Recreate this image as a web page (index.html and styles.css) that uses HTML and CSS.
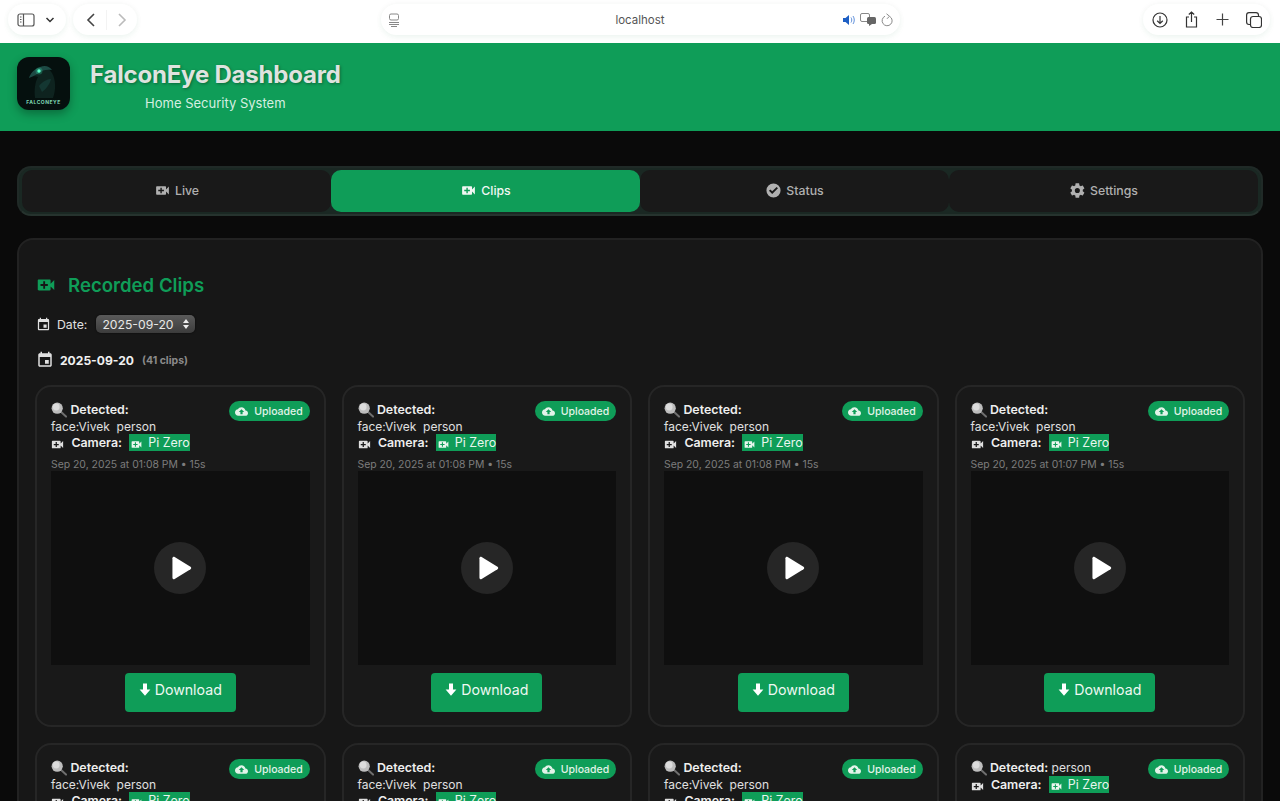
FILE: index.html
```html
<!DOCTYPE html>
<html lang="en">
<head>
    <meta charset="UTF-8">
    <meta name="viewport" content="width=device-width, initial-scale=1.0">
    <title>FalconEye Dashboard</title>
    <link rel="stylesheet" href="styles.css">
</head>
<body>
    <svg class="sprites" width="0" height="0">
        <symbol id="i-video" viewBox="0 0 24 24"><path d="M17 10.5V7c0-.55-.45-1-1-1H4c-.55 0-1 .45-1 1v10c0 .55.45 1 1 1h12c.55 0 1-.45 1-1v-3.5l4 4v-11l-4 4zM14 13h-3v3H9v-3H6v-2h3V8h2v3h3v2z"/></symbol>
        <symbol id="i-event" viewBox="0 0 24 24"><path d="M17 12h-5v5h5v-5zM16 1v2H8V1H6v2H5c-1.11 0-1.99.9-1.99 2L3 19c0 1.1.89 2 2 2h14c1.1 0 2-.9 2-2V5c0-1.1-.9-2-2-2h-1V1h-2zm3 18H5V8h14v11z"/></symbol>
        <symbol id="i-check" viewBox="0 0 24 24"><path d="M12 2a10 10 0 1 0 0 20 10 10 0 0 0 0-20zm-1.8 15-4.6-4.6 1.9-1.9 2.7 2.7 6.2-6.2 1.9 1.9-8.1 8.1z"/></symbol>
        <symbol id="i-gear" viewBox="0 0 24 24"><path d="M19.4 13c.04-.33.06-.66.06-1s-.02-.67-.07-1l2.16-1.68c.2-.15.25-.42.13-.64l-2.05-3.55c-.12-.22-.38-.3-.61-.22l-2.55 1.03c-.53-.4-1.1-.74-1.73-1l-.38-2.72A.5.5 0 0 0 13.86 1.8H9.76c-.25 0-.46.18-.5.42l-.38 2.72c-.63.26-1.2.6-1.73 1L4.6 4.9c-.23-.09-.49 0-.61.22L1.94 8.68c-.13.22-.07.49.12.64L4.22 11c-.05.33-.08.67-.08 1s.03.67.08 1l-2.16 1.68c-.2.15-.25.42-.12.64l2.05 3.55c.12.22.38.3.61.22l2.55-1.03c.53.4 1.1.74 1.73 1l.38 2.72c.04.24.25.42.5.42h4.1c.25 0 .46-.18.5-.42l.38-2.72c.63-.26 1.2-.6 1.73-1l2.55 1.03c.23.09.49 0 .61-.22l2.05-3.55c.12-.22.07-.49-.13-.64L19.4 13zM11.8 15.6a3.6 3.6 0 1 1 0-7.2 3.6 3.6 0 0 1 0 7.2z"/></symbol>
        <symbol id="i-cloud" viewBox="0 0 24 24"><path d="M19.35 10.04C18.67 6.59 15.64 4 12 4 9.11 4 6.6 5.64 5.35 8.04 2.34 8.36 0 10.91 0 14c0 3.31 2.69 6 6 6h13c2.76 0 5-2.24 5-5 0-2.64-2.05-4.78-4.65-4.96zM14 13v4h-4v-4H7l5-5 5 5h-3z"/></symbol>
        <symbol id="i-lens" viewBox="0 0 16 16">
            <path d="M9.6 9.6 15 14.6" stroke="#6f6f6f" stroke-width="2" stroke-linecap="round" fill="none"/>
            <circle cx="6.2" cy="6.2" r="5.6" fill="#bdbdbd"/>
            <circle cx="5.2" cy="5" r="3.4" fill="#dcdcdc"/>
        </symbol>
        <symbol id="i-play" viewBox="0 0 24 24"><path d="M5.5 3.6c0-1 1-1.6 1.900-1.100l13.600 8.400c.8.5.8 1.700 0 2.200L7.400 21.500c-.9.5-1.900-.1-1.900-1.100V3.600z"/></symbol>
        <symbol id="i-down" viewBox="0 0 12 14"><path d="M4 1h4v6h3.400L6 13.200.6 7H4z"/></symbol>
    </svg>

    <div class="page">
        <div class="toolbar">
            <div class="tool-group">
                <div class="pill pill-side">
                    <svg class="tool-icon" width="18" height="14" viewBox="0 0 18 14" fill="none" stroke="#555" stroke-width="1.2"><rect x="1" y="1" width="16" height="12" rx="2"/><path d="M6.5 1v12M3 4h1.5M3 6.5h1.5M3 9h1.5"/></svg>
                    <svg class="tool-icon" width="10" height="6" viewBox="0 0 10 6" fill="none" stroke="#333" stroke-width="1.5"><path d="M1.5 1 5 4.5 8.500 1"/></svg>
                </div>
                <div class="pill pill-nav">
                    <svg class="tool-icon" width="10" height="14" viewBox="0 0 10 14" fill="none" stroke="#444" stroke-width="1.6"><path d="M8 1 2 7l6 6"/></svg>
                    <span class="pill-sep"></span>
                    <svg class="tool-icon" width="10" height="14" viewBox="0 0 10 14" fill="none" stroke="#bbb" stroke-width="1.6"><path d="M2 1l6 6-6 6"/></svg>
                </div>
            </div>
            <div class="pill pill-url">
                <svg class="tool-icon" width="12" height="14" viewBox="0 0 12 14" fill="none" stroke="#888" stroke-width="1"><rect x="1.500" y="1" width="9" height="6" rx="1.500"/><path d="M1 9.500h10M1 11.500h10M3 13.500h6"/></svg>
                <span class="url-text">localhost</span>
                <div class="url-icons">
                    <svg class="tool-icon" width="13" height="12" viewBox="0 0 13 12"><path d="M0 4h2.500L6 1v10L2.500 8H0z" fill="#1d5fc4"/><path d="M8 3.500c1 1.400 1 3.600 0 5M10 2c1.700 2.200 1.700 5.800 0 8" fill="none" stroke="#4f83d6" stroke-width=".9"/></svg>
                    <svg class="tool-icon" width="17" height="13" viewBox="0 0 17 13"><rect x=".5" y=".5" width="9" height="8" rx="1.500" fill="#fff" stroke="#888"/><rect x="7" y="4" width="9" height="7" rx="1.500" fill="#666"/><path d="M9 11v2l3-2z" fill="#666"/></svg>
                    <svg class="tool-icon" width="12" height="14" viewBox="0 0 12 14" fill="none" stroke="#8a8a8a" stroke-width="1"><path d="M8.800 3.500A5 5 0 1 1 4 3.200"/><path d="M5.500 .8 8.500 3.200 6 5.800"/></svg>
                </div>
            </div>
            <div class="pill pill-right">
                <svg class="tool-icon" width="16" height="16" viewBox="0 0 16 16" fill="none" stroke="#333" stroke-width="1.200"><circle cx="8" cy="8" r="7"/><path d="M8 4v7.500M5.200 8.800 8 11.500l2.800-2.700"/></svg>
                <svg class="tool-icon" width="13" height="17" viewBox="0 0 13 17" fill="none" stroke="#333" stroke-width="1.200"><path d="M4 6H1.500v10h10V6H9M6.500 11V1M3.800 3.500 6.500 1l2.700 2.500"/></svg>
                <svg class="tool-icon" width="13" height="13" viewBox="0 0 13 13" fill="none" stroke="#444" stroke-width="1.200"><path d="M6.500 .5v12M.5 6.500h12"/></svg>
                <svg class="tool-icon" width="16" height="16" viewBox="0 0 16 16" fill="none" stroke="#333" stroke-width="1.200"><rect x="4.500" y="4.500" width="11" height="11" rx="2.500"/><path d="M4.500 12.500H3A2.500 2.500 0 0 1 .6 10V3A2.500 2.500 0 0 1 3 .6h7a2.500 2.500 0 0 1 2.500 2.400v1.500"/></svg>
            </div>
        </div>

        <header class="app-header">
            <div class="logo">
                <svg class="logo-bird" width="34" height="36" viewBox="0 0 34 36">
                    <path d="M26 36c3-8 3-18-1-25-3-5-9-7-14-5C7 8 5 11 3 15c3-1 6-1 8 0-3 5-4 13-3 21z" fill="#0e231f"/>
                    <path d="M2 16c1-4 5-9 11-11 5-2 9-1 12 3-5-1-10 0-13 3-3 2-6 3-10 5z" fill="#1d4a44"/>
                    <path d="M12 24c3-4 8-7 12-7-1 5-5 10-9 13z" fill="#143732"/>
                    <circle cx="12" cy="9" r="3.500" fill="#38e6b0" opacity=".25"/>
                    <circle cx="12" cy="9" r="1.700" fill="#5dffc8"/>
                </svg>
                <span class="logo-text">FALCONEYE</span>
            </div>
            <div class="brand">
                <h1>FalconEye Dashboard</h1>
                <p>Home Security System</p>
            </div>
        </header>

        <main class="content">
            <nav class="tabs">
                <a class="tab"><svg class="icon"><use href="#i-video"/></svg>Live</a>
                <a class="tab active"><svg class="icon"><use href="#i-video"/></svg>Clips</a>
                <a class="tab"><svg class="icon"><use href="#i-check"/></svg>Status</a>
                <a class="tab"><svg class="icon"><use href="#i-gear"/></svg>Settings</a>
            </nav>

            <section class="panel">
                <h2 class="panel-title"><svg class="icon"><use href="#i-video"/></svg>Recorded Clips</h2>
                <div class="date-filter">
                    <svg class="icon"><use href="#i-event"/></svg>
                    <label>Date:</label>
                    <div class="date-select">2025-09-20
                        <svg width="6" height="10" viewBox="0 0 6 10" fill="#eee"><path d="M3 0l3 4H0zM3 10 0 6h6z"/></svg>
                    </div>
                </div>
                <div class="date-heading">
                    <svg class="icon"><use href="#i-event"/></svg>
                    <strong>2025-09-20</strong>
                    <small>(41 clips)</small>
                </div>

                <div class="clip-grid">
                    <article class="clip">
                        <div class="clip-head">
                            <div class="clip-info">
                                <svg class="lens"><use href="#i-lens"/></svg> <b>Detected:</b> <span class="nowrap">face:Vivek&nbsp; person</span><br>
                                <svg class="icon"><use href="#i-video"/></svg> <b>Camera:</b> <span class="cam"><svg class="icon"><use href="#i-video"/></svg>Pi Zero</span>
                            </div>
                            <span class="badge"><svg class="icon"><use href="#i-cloud"/></svg>Uploaded</span>
                        </div>
                        <div class="clip-time">Sep 20, 2025 at 01:08 PM • 15s</div>
                        <div class="video"><span class="play"><svg><use href="#i-play"/></svg></span></div>
                        <a class="download"><svg><use href="#i-down"/></svg>Download</a>
                    </article>
                    <article class="clip">
                        <div class="clip-head">
                            <div class="clip-info">
                                <svg class="lens"><use href="#i-lens"/></svg> <b>Detected:</b> <span class="nowrap">face:Vivek&nbsp; person</span><br>
                                <svg class="icon"><use href="#i-video"/></svg> <b>Camera:</b> <span class="cam"><svg class="icon"><use href="#i-video"/></svg>Pi Zero</span>
                            </div>
                            <span class="badge"><svg class="icon"><use href="#i-cloud"/></svg>Uploaded</span>
                        </div>
                        <div class="clip-time">Sep 20, 2025 at 01:08 PM • 15s</div>
                        <div class="video"><span class="play"><svg><use href="#i-play"/></svg></span></div>
                        <a class="download"><svg><use href="#i-down"/></svg>Download</a>
                    </article>
                    <article class="clip">
                        <div class="clip-head">
                            <div class="clip-info">
                                <svg class="lens"><use href="#i-lens"/></svg> <b>Detected:</b> <span class="nowrap">face:Vivek&nbsp; person</span><br>
                                <svg class="icon"><use href="#i-video"/></svg> <b>Camera:</b> <span class="cam"><svg class="icon"><use href="#i-video"/></svg>Pi Zero</span>
                            </div>
                            <span class="badge"><svg class="icon"><use href="#i-cloud"/></svg>Uploaded</span>
                        </div>
                        <div class="clip-time">Sep 20, 2025 at 01:08 PM • 15s</div>
                        <div class="video"><span class="play"><svg><use href="#i-play"/></svg></span></div>
                        <a class="download"><svg><use href="#i-down"/></svg>Download</a>
                    </article>
                    <article class="clip">
                        <div class="clip-head">
                            <div class="clip-info">
                                <svg class="lens"><use href="#i-lens"/></svg> <b>Detected:</b> <span class="nowrap">face:Vivek&nbsp; person</span><br>
                                <svg class="icon"><use href="#i-video"/></svg> <b>Camera:</b> <span class="cam"><svg class="icon"><use href="#i-video"/></svg>Pi Zero</span>
                            </div>
                            <span class="badge"><svg class="icon"><use href="#i-cloud"/></svg>Uploaded</span>
                        </div>
                        <div class="clip-time">Sep 20, 2025 at 01:07 PM • 15s</div>
                        <div class="video"><span class="play"><svg><use href="#i-play"/></svg></span></div>
                        <a class="download"><svg><use href="#i-down"/></svg>Download</a>
                    </article>
                    <article class="clip">
                        <div class="clip-head">
                            <div class="clip-info">
                                <svg class="lens"><use href="#i-lens"/></svg> <b>Detected:</b> <span class="nowrap">face:Vivek&nbsp; person</span><br>
                                <svg class="icon"><use href="#i-video"/></svg> <b>Camera:</b> <span class="cam"><svg class="icon"><use href="#i-video"/></svg>Pi Zero</span>
                            </div>
                            <span class="badge"><svg class="icon"><use href="#i-cloud"/></svg>Uploaded</span>
                        </div>
                    </article>
                    <article class="clip">
                        <div class="clip-head">
                            <div class="clip-info">
                                <svg class="lens"><use href="#i-lens"/></svg> <b>Detected:</b> <span class="nowrap">face:Vivek&nbsp; person</span><br>
                                <svg class="icon"><use href="#i-video"/></svg> <b>Camera:</b> <span class="cam"><svg class="icon"><use href="#i-video"/></svg>Pi Zero</span>
                            </div>
                            <span class="badge"><svg class="icon"><use href="#i-cloud"/></svg>Uploaded</span>
                        </div>
                    </article>
                    <article class="clip">
                        <div class="clip-head">
                            <div class="clip-info">
                                <svg class="lens"><use href="#i-lens"/></svg> <b>Detected:</b> <span class="nowrap">face:Vivek&nbsp; person</span><br>
                                <svg class="icon"><use href="#i-video"/></svg> <b>Camera:</b> <span class="cam"><svg class="icon"><use href="#i-video"/></svg>Pi Zero</span>
                            </div>
                            <span class="badge"><svg class="icon"><use href="#i-cloud"/></svg>Uploaded</span>
                        </div>
                    </article>
                    <article class="clip">
                        <div class="clip-head">
                            <div class="clip-info">
                                <svg class="lens"><use href="#i-lens"/></svg> <b>Detected:</b> <span class="nowrap">person</span><br>
                                <svg class="icon"><use href="#i-video"/></svg> <b>Camera:</b> <span class="cam"><svg class="icon"><use href="#i-video"/></svg>Pi Zero</span>
                            </div>
                            <span class="badge"><svg class="icon"><use href="#i-cloud"/></svg>Uploaded</span>
                        </div>
                    </article>
                </div>
            </section>
        </main>
    </div>
</body>
</html>
```

FILE: styles.css
```css
* {
    box-sizing: border-box;
}
html, body {
    margin: 0;
    height: 100%;
    overflow: hidden;
}
body {
    font-family: 'Inter', 'Liberation Sans', sans-serif;
    background: #0a0a0a;
    color: #e0e0e0;
}
.sprites {
    position: absolute;
}
.page {
    height: 100vh;
    overflow: hidden;
}
.icon {
    width: 14px;
    height: 14px;
    fill: currentColor;
    flex: none;
}
.nowrap {
    white-space: nowrap;
}

/* browser bar */
.toolbar {
    height: 43px;
    background: #fff;
    display: flex;
    align-items: flex-start;
    padding: 4px 10px 0 8px;
}
.tool-group {
    display: flex;
    gap: 7px;
}
.pill {
    height: 31px;
    border-radius: 16px;
    background: #fff;
    box-shadow: 0 3px 6px rgba(15, 157, 88, 0.05), 0 0 6px rgba(0, 0, 0, 0.04);
    display: flex;
    align-items: center;
}
.tool-icon {
    flex: none;
}
.pill-side {
    width: 58px;
    padding: 0 11px 0 9px;
    justify-content: space-between;
}
.pill-nav {
    width: 64px;
    padding: 0 10px 0 13px;
    justify-content: space-between;
}
.pill-sep {
    width: 1px;
    height: 20px;
    background: #f3f3f3;
}
.pill-url {
    width: 519px;
    margin: 0 auto;
    padding: 0 7px;
    position: relative;
    justify-content: space-between;
}
.url-text {
    position: absolute;
    left: 0;
    right: 0;
    text-align: center;
    font-size: 11.5px;
    color: #555;
}
.url-icons {
    display: flex;
    align-items: center;
    gap: 4px;
}
.pill-right {
    width: 127px;
    padding: 0 8px 0 9px;
    justify-content: space-between;
}

/* green header */
.app-header {
    height: 88px;
    background: #0f9d58;
    display: flex;
    align-items: flex-start;
    gap: 20px;
    padding: 14px 17px 0;
}
.logo {
    width: 53px;
    height: 53px;
    border-radius: 12px;
    background: #05100e;
    box-shadow: 0 4px 10px rgba(0, 0, 0, 0.3);
    display: flex;
    flex-direction: column;
    align-items: center;
    justify-content: flex-end;
    padding-bottom: 4px;
    overflow: hidden;
}
.logo-bird {
    display: block;
    margin-bottom: 1px;
}
.logo-text {
    font-size: 5px;
    font-weight: 700;
    letter-spacing: 0.5px;
    color: #7fd8b4;
    line-height: 7px;
}
.brand {
    text-align: center;
    margin-top: 3px;
}
.brand h1 {
    margin: 0;
    font-size: 24px;
    font-weight: 700;
    letter-spacing: -0.2px;
    line-height: 30px;
    color: #dfe3df;
    text-shadow: 1px 1px 3px rgba(0, 0, 0, 0.35);
}
.brand p {
    margin: 5px 0 0;
    font-size: 13px;
    line-height: 16px;
    color: #d6efe1;
}

/* tabs */
.content {
    padding: 35px 17px 0;
}
.tabs {
    height: 50px;
    display: grid;
    grid-template-columns: repeat(4, 1fr);
    padding: 2px 3px 2px;
    border: 2px solid #202a27;
    border-bottom-color: #26332e;
    border-radius: 14px;
    background: #1a2823;
    margin-bottom: 22px;
}
.tab {
    display: flex;
    align-items: center;
    justify-content: center;
    gap: 4px;
    padding-bottom: 2px;
    font-size: 12.3px;
    font-weight: 500;
    color: #b0b0b0;
    background: #191919;
    border-radius: 10px;
}
.tab.active {
    background: #0f9d58;
    color: #f1f7f3;
}
.tab .icon {
    width: 17px;
    height: 17px;
}

/* clips panel */
.panel {
    background: #171717;
    border: 2px solid #222;
    border-radius: 16px;
    padding: 32px 16px 16px;
}
.panel-title {
    margin: 0 0 17px;
    display: flex;
    align-items: center;
    gap: 11px;
    font-size: 18.6px;
    line-height: 26px;
    font-weight: 600;
    color: #0f9d58;
}
.panel-title .icon {
    width: 22px;
    height: 22px;
}
.date-filter {
    display: flex;
    align-items: center;
    font-size: 12.3px;
    color: #e0e0e0;
    height: 18px;
    margin-bottom: 18px;
}
.date-filter .icon {
    width: 15px;
    height: 15px;
    margin: 0 6px 0 1px;
}
.date-filter label {
    margin-right: 9px;
}
.date-select {
    width: 99px;
    height: 18px;
    border-radius: 5px;
    background: linear-gradient(#5a5a5a, #3c3c3c);
    box-shadow: 0 0 2px rgba(0, 0, 0, 0.8);
    display: flex;
    align-items: center;
    justify-content: space-between;
    padding: 0 6px;
    font-size: 12.2px;
    color: #e8e8e8;
}
.date-heading {
    display: flex;
    align-items: center;
    height: 18px;
    margin-bottom: 16px;
}
.date-heading .icon {
    width: 18px;
    height: 18px;
    margin: 0 6px 0 1px;
}
.date-heading strong {
    font-size: 12.1px;
    font-weight: 700;
    color: #f0f0f0;
    margin-right: 8px;
}
.date-heading small {
    font-size: 10.5px;
    font-weight: 700;
    color: #8a8a8a;
}

/* clip cards */
.clip-grid {
    display: grid;
    grid-template-columns: repeat(4, 1fr);
    gap: 16px;
}
.clip {
    background: #191919;
    border: 2px solid #262626;
    border-radius: 16px;
    padding: 14px 14px 13px;
    display: flex;
    flex-direction: column;
}
.clip-head {
    display: flex;
    justify-content: space-between;
    align-items: flex-start;
}
.clip-info {
    font-size: 12px;
    line-height: 16.5px;
    color: #e0e0e0;
    width: 170px;
    padding-top: 1px;
}
.clip-info b {
    font-size: 12.4px;
    font-weight: 600;
    color: #eee;
}
.clip-info .icon {
    width: 15px;
    height: 15px;
    vertical-align: -3px;
    margin: -2px 3px -2px -1px;
}
.lens {
    width: 16px;
    height: 16px;
    vertical-align: -2px;
    margin: -2px 0;
}
.cam {
    background: #0f9d58;
    color: #eaf6ef;
    font-size: 12.4px;
    margin-left: 4px;
    padding: 1px 0 1px 1px;
}
.clip-info .cam .icon {
    width: 13px;
    height: 13px;
    vertical-align: -2px;
    margin: -2px 5px -2px 0;
}
.badge {
    flex: none;
    height: 20px;
    width: 81px;
    border-radius: 10px;
    background: #0f9d58;
    color: #e2f3e9;
    font-size: 10.5px;
    font-weight: 500;
    display: flex;
    align-items: center;
    justify-content: center;
    gap: 6px;
}
.badge .icon {
    width: 13px;
    height: 13px;
}
.clip-time {
    font-size: 10.4px;
    line-height: 13px;
    color: #7d7d7d;
    margin: 6.5px 0 0;
}
.video {
    height: 194px;
    background: #0f0f0f;
    display: flex;
    align-items: center;
    justify-content: center;
}
.play {
    width: 52px;
    height: 52px;
    border-radius: 50%;
    background: #262626;
    display: flex;
    align-items: center;
    justify-content: center;
}
.play svg {
    width: 28px;
    height: 28px;
    fill: #fff;
}
.download {
    align-self: center;
    width: 111px;
    height: 39px;
    margin-top: 8px;
    border-radius: 4px;
    background: #0f9d58;
    color: #eef8f2;
    font-size: 14.2px;
    display: flex;
    align-items: center;
    justify-content: center;
    gap: 4px;
    padding-bottom: 6px;
}
.download svg {
    width: 12px;
    height: 15px;
    fill: #fff;
}
```
